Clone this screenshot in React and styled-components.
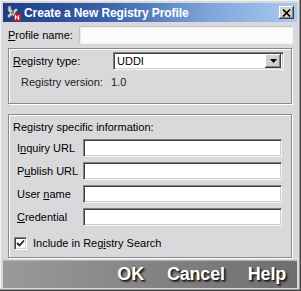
import styled, { createGlobalStyle } from 'styled-components';

// Estilos globales: sin márgenes y fuente tipo Arial.
const GlobalStyle = createGlobalStyle`
  html, body {
    margin: 0;
    padding: 0;
    background: #d9d9dc;
  }
  * {
    box-sizing: border-box;
  }
`;

// Ventana principal del diálogo.
const Window = styled.div`
  width: 301px;
  height: 291px;
  display: flex;
  flex-direction: column;
  padding: 3px 4px 3px 3px;
  background: #d9d9dc;
  box-shadow: inset -1px -1px #404040, inset -2px -2px #9a9a9a, inset 1px 1px #f2f2f2;
  font-family: "Liberation Sans", Arial, sans-serif;
  font-size: 11px;
  color: #000;
`;

const TitleBar = styled.div`
  height: 19px;
  display: flex;
  align-items: center;
  gap: 3px;
  padding: 0 3px 0 2px;
  background: linear-gradient(to right, #1c3d84 0%, #3a62a8 35%, #7ea5d9 70%, #a9cbf2 100%);
`;

const TitleText = styled.span`
  color: #fff;
  font-weight: bold;
  font-size: 12px;
  letter-spacing: -0.1px;
`;

const CloseButton = styled.div`
  margin-left: auto;
  width: 15px;
  height: 13px;
  display: flex;
  align-items: center;
  justify-content: center;
  background: #d4d0c8;
  box-shadow: inset -1px -1px #404040, inset 1px 1px #fff, inset -2px -2px #808080;
`;

const Row = styled.div`
  display: flex;
  align-items: center;
  height: 18px;
  margin-top: ${(p) => p.$top || 0}px;
  padding-left: ${(p) => p.$indent || 0}px;
  padding-right: ${(p) => p.$right || 0}px;
`;

const Label = styled.span`
  width: ${(p) => p.$width}px;
  flex: none;
  white-space: nowrap;
  color: ${(p) => p.$muted ? '#222' : '#000'};
`;

const Mn = styled.span`
  text-decoration: underline;
  text-underline-offset: 1px;
`;

const Field = styled.div`
  flex: 1;
  height: 18px;
  background: #fff;
  border-top: 1px solid #808080;
  border-left: 1px solid #808080;
  border-right: 1px solid #f4f4f4;
  border-bottom: 1px solid #f4f4f4;
  box-shadow: inset 1px 1px #404040, inset -1px -1px #d4d0c8;
`;

const FlatField = styled(Field)`
  background: #fbfbfb;
  border-color: #c4c4c4 #f2f2f2 #f2f2f2 #c4c4c4;
  box-shadow: inset 1px 1px #ececec;
`;

const Select = styled(Field)`
  display: flex;
  align-items: center;
  padding: 0 2px 0 3px;
`;

const SelectValue = styled.span`
  flex: 1;
`;

const ArrowButton = styled.div`
  width: 16px;
  height: 14px;
  display: flex;
  align-items: center;
  justify-content: center;
  background: #d4d0c8;
  box-shadow: inset -1px -1px #404040, inset 1px 1px #fff, inset -2px -2px #808080;
`;

const Group = styled.div`
  margin: ${(p) => p.$top}px 5px 0 5px;
  height: ${(p) => p.$height}px;
  border: 1px solid #8a8a8a;
  box-shadow: inset 1px 1px #fff, 1px 1px #fff;
  padding: 3px ${(p) => p.$right}px 0 4px;
  display: flex;
  flex-direction: column;
`;

const CheckRow = styled.label`
  display: flex;
  align-items: center;
  height: 18px;
  margin-top: 8px;
  padding-left: 1px;
  gap: 6px;
`;

const CheckBox = styled.div`
  width: 13px;
  height: 13px;
  background: #fff;
  border-top: 1px solid #808080;
  border-left: 1px solid #808080;
  border-right: 1px solid #fff;
  border-bottom: 1px solid #fff;
  box-shadow: inset 1px 1px #404040, inset -1px -1px #d4d0c8;
  display: flex;
  align-items: center;
  justify-content: center;
`;

const ButtonBar = styled.div`
  margin-top: 2px;
  height: 28px;
  display: flex;
  align-items: center;
  justify-content: flex-end;
  gap: 23px;
  padding-right: 11px;
  background: linear-gradient(to right, #9a9a9a 0%, #868686 45%, #6e6e6e 100%);
  box-shadow: inset 0 1px #b4b4b4;
`;

const BarButton = styled.span`
  color: #fff;
  font-weight: bold;
  font-size: 18px;
  letter-spacing: -0.2px;
  text-shadow: 1px 1px 1px #1a1a1a, 2px 2px 2px #333;
  cursor: pointer;
`;

const AppIcon = () => (
  <svg width="16" height="16" viewBox="0 0 16 16">
    <path d="M3 1 L6 1 L6 4 L8 6 L11 3 L13 5 L10 8 L12 10 L9 12 L7 10 L4 13 L2 11 L5 8 L3 6 Z" fill="#c8ccd4" stroke="#5a5e68" strokeWidth="0.8" />
    <circle cx="7.5" cy="7.5" r="1.3" fill="#5a5e68" />
    <rect x="9" y="9" width="7" height="7" fill="#d42020" />
    <path d="M10.5 14.5 V10.5 L13.5 14.5 V10.5" stroke="#fff" strokeWidth="1" fill="none" />
  </svg>
);

const CloseIcon = () => (
  <svg width="9" height="8" viewBox="0 0 9 8">
    <path d="M1 0.5 L8 7.5 M8 0.5 L1 7.5" stroke="#000" strokeWidth="1.6" />
  </svg>
);

const DownArrow = () => (
  <svg width="7" height="4" viewBox="0 0 7 4">
    <path d="M0 0 H7 L3.5 4 Z" fill="#000" />
  </svg>
);

const CheckMark = () => (
  <svg width="9" height="9" viewBox="0 0 9 9">
    <path d="M1 4 L3.5 6.5 L8 1.5" stroke="#222" strokeWidth="1.8" fill="none" />
  </svg>
);

const fields = [
  { pre: 'I', mn: 'n', post: 'quiry URL' },
  { pre: 'P', mn: 'u', post: 'blish URL' },
  { pre: 'User ', mn: 'n', post: 'ame' },
  { pre: '', mn: 'C', post: 'redential' },
];

export default function App() {
  return (
    <>
      <GlobalStyle />
      <Window>
        <TitleBar>
          <AppIcon />
          <TitleText>Create a New Registry Profile</TitleText>
          <CloseButton>
            <CloseIcon />
          </CloseButton>
        </TitleBar>

        <Row $top={4} $indent={5} $right={4}>
          <Label $width={71}>
            <Mn>P</Mn>rofile name:
          </Label>
          <FlatField />
        </Row>

        <Group $top={4} $height={56} $right={7}>
          <Row>
            <Label $width={100}>
              <Mn>R</Mn>egistry type:
            </Label>
            <Select>
              <SelectValue>UDDI</SelectValue>
              <ArrowButton>
                <DownArrow />
              </ArrowButton>
            </Select>
          </Row>
          <Row $top={3} $indent={8}>
            <Label $width={90} $muted>Registry version:</Label>
            <Label $muted>1.0</Label>
          </Row>
        </Group>

        <Group $top={10} $height={144} $right={9}>
          <Row>
            <Label>Registry specific information:</Label>
          </Row>
          {fields.map((f, i) => (
            <Row key={i} $top={i === 0 ? 3 : 5} $indent={4}>
              <Label $width={66}>
                {f.pre}
                <Mn>{f.mn}</Mn>
                {f.post}
              </Label>
              <Field />
            </Row>
          ))}
          <CheckRow>
            <CheckBox>
              <CheckMark />
            </CheckBox>
            <span>
              Include in Reg<Mn>i</Mn>stry Search
            </span>
          </CheckRow>
        </Group>

        <ButtonBar>
          <BarButton>OK</BarButton>
          <BarButton>Cancel</BarButton>
          <BarButton>Help</BarButton>
        </ButtonBar>
      </Window>
    </>
  );
}
